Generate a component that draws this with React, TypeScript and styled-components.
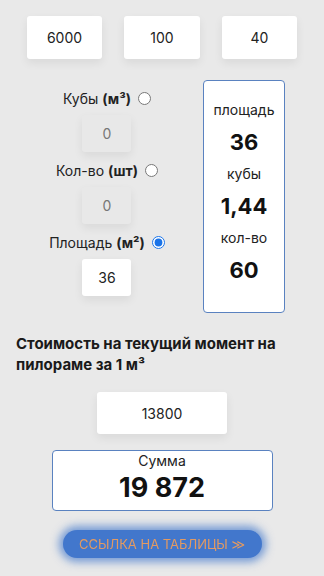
import React from "react"
import styled, { createGlobalStyle } from "styled-components"

const GlobalStyle = createGlobalStyle`
  html, body {
    margin: 0;
    padding: 0;
    background: #e9e9e9;
  }
  body {
    font-family: "Inter", "Noto Sans", "DejaVu Sans", sans-serif;
    color: #111;
  }
`

const Page = styled.div`
  width: 324px;
  min-height: 576px;
  background: #e9e9e9;
  padding-top: 16px;
  box-sizing: border-box;
`

//top inputs
const TopRow = styled.div`
  display: flex;
  justify-content: center;
  gap: 22px;
`

const Field = styled.input<{ $w: number; $h: number; $grey?: boolean }>`
  box-sizing: border-box;
  width: ${p => p.$w}px;
  height: ${p => p.$h}px;
  border: none;
  outline: none;
  border-radius: 3px;
  background: ${p => (p.$grey ? "#e8e8e8" : "#fff")};
  box-shadow: 0 4px 10px rgba(0, 0, 0, 0.07);
  text-align: center;
  font-family: inherit;
  font-size: 14px;
  color: ${p => (p.$grey ? "#777" : "#222")};
  padding: 0;
`

//middle block
const Middle = styled.div`
  display: flex;
  align-items: flex-start;
  gap: 16px;
  padding-left: 27px;
  margin-top: 21px;
`

const LeftCol = styled.div`
  width: 160px;
  display: flex;
  flex-direction: column;
  align-items: center;
  padding-top: 9px;
  gap: 9px;
`

const Label = styled.label`
  display: flex;
  align-items: center;
  gap: 7px;
  height: 18px;
  font-size: 14px;
  color: #222;
  b {
    font-weight: 700;
  }
`

const Radio = styled.input`
  width: 13px;
  height: 13px;
  margin: 0;
  accent-color: #1a73e8;
`

const Group = styled.div`
  display: flex;
  flex-direction: column;
  align-items: center;
  gap: 8px;
`

const Panel = styled.div`
  box-sizing: border-box;
  width: 82px;
  height: 233px;
  background: #fff;
  border: 1.5px solid #5a82c0;
  border-radius: 4px;
  padding-top: 13px;
  display: flex;
  flex-direction: column;
  align-items: center;
`

const PanelLabel = styled.div`
  font-size: 14px;
  line-height: 32px;
  color: #222;
`

const PanelValue = styled.div`
  font-size: 22px;
  font-weight: 700;
  line-height: 32px;
  color: #111;
`

//price
const Heading = styled.h2`
  margin: 20px 0 0;
  padding: 0 16px;
  font-size: 15px;
  line-height: 21px;
  font-weight: 700;
  color: #1a1a1a;
`

const Center = styled.div<{ $mt: number }>`
  display: flex;
  justify-content: center;
  margin-top: ${p => p.$mt}px;
`

const SumBox = styled.div`
  box-sizing: border-box;
  width: 221px;
  height: 61px;
  background: #fff;
  border: 1.5px solid #5a82c0;
  border-radius: 4px;
  display: flex;
  flex-direction: column;
  align-items: center;
`

const SumLabel = styled.div`
  font-size: 14px;
  line-height: 20px;
  color: #222;
`

const SumValue = styled.div`
  font-size: 27px;
  line-height: 34px;
  font-weight: 700;
  color: #111;
`

const LinkButton = styled.a`
  box-sizing: border-box;
  width: 199px;
  height: 28px;
  border-radius: 14px;
  background: #4277cc;
  box-shadow: 0 0 8px 4px rgba(66, 119, 204, 0.7);
  display: flex;
  align-items: center;
  justify-content: center;
  font-size: 13px;
  color: #e39a62;
  text-transform: uppercase;
  text-decoration: none;
  filter: blur(0.5px);
`

export default function App() {
  return (
    <Page>
      <GlobalStyle />
      <TopRow>
        <Field $w={75} $h={43} defaultValue="6000" />
        <Field $w={76} $h={43} defaultValue="100" />
        <Field $w={75} $h={43} defaultValue="40" />
      </TopRow>

      <Middle>
        <LeftCol>
          <Group>
            <Label>
              <span>Кубы <b>(м³)</b></span>
              <Radio type="radio" name="mode" />
            </Label>
            <Field $w={49} $h={37} $grey disabled defaultValue="0" />
          </Group>
          <Group>
            <Label>
              <span>Кол-во <b>(шт)</b></span>
              <Radio type="radio" name="mode" />
            </Label>
            <Field $w={49} $h={37} $grey disabled defaultValue="0" />
          </Group>
          <Group>
            <Label>
              <span>Площадь <b>(м²)</b></span>
              <Radio type="radio" name="mode" defaultChecked />
            </Label>
            <Field $w={49} $h={37} defaultValue="36" />
          </Group>
        </LeftCol>

        <Panel>
          <PanelLabel>площадь</PanelLabel>
          <PanelValue>36</PanelValue>
          <PanelLabel>кубы</PanelLabel>
          <PanelValue>1,44</PanelValue>
          <PanelLabel>кол-во</PanelLabel>
          <PanelValue>60</PanelValue>
        </Panel>
      </Middle>

      <Heading>Стоимость на текущий момент на пилораме за 1 м³</Heading>

      <Center $mt={17}>
        <Field $w={130} $h={42} defaultValue="13800" />
      </Center>

      <Center $mt={16}>
        <SumBox>
          <SumLabel>Сумма</SumLabel>
          <SumValue>19 872</SumValue>
        </SumBox>
      </Center>

      <Center $mt={19}>
        <LinkButton href="#">Ссылка на таблицы ≫</LinkButton>
      </Center>
    </Page>
  )
}
